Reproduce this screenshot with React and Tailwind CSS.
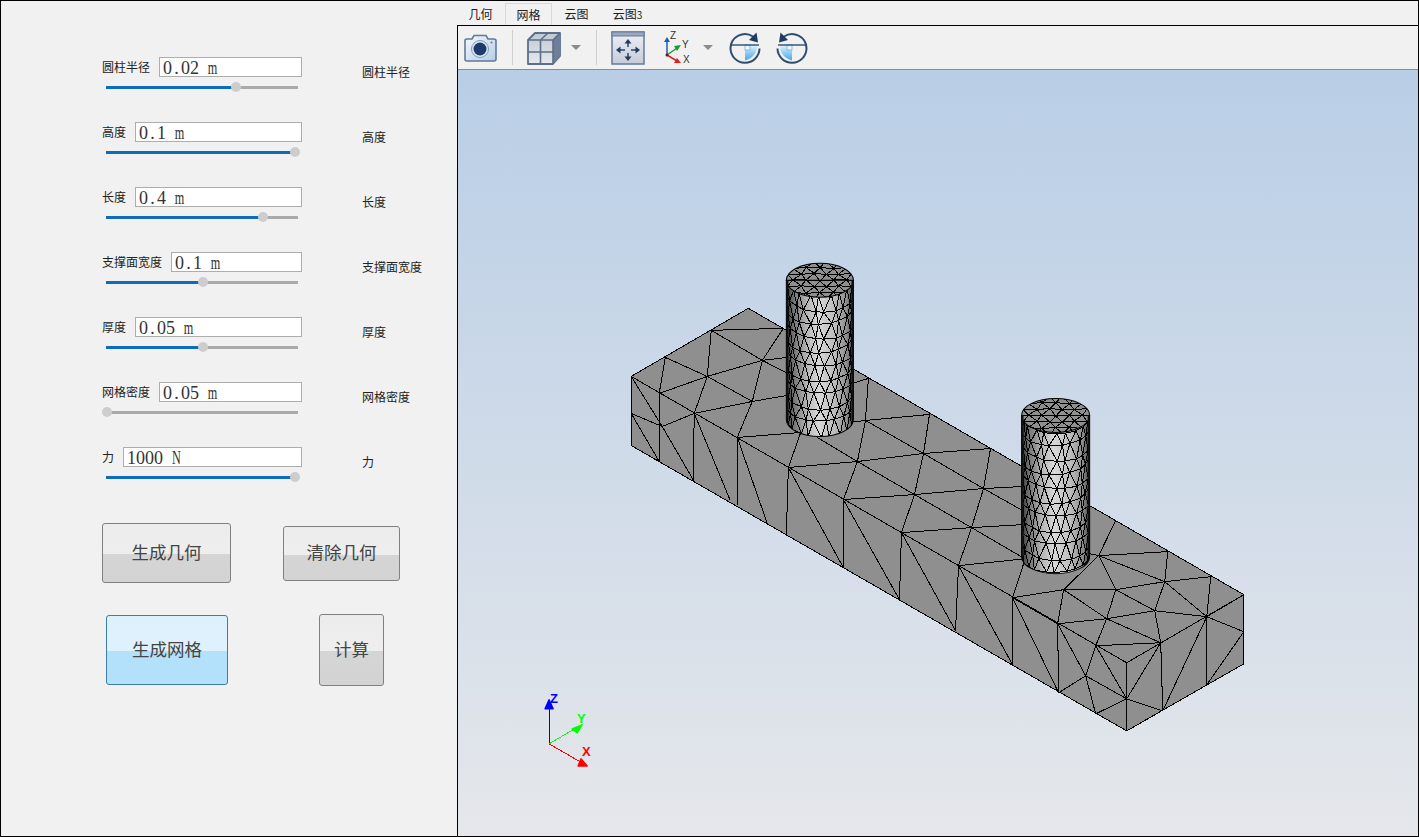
const rows = [
  { label: "圆柱半径", value: "0.02 m", thumb: 236 },
  { label: "高度", value: "0.1 m", thumb: 295 },
  { label: "长度", value: "0.4 m", thumb: 263 },
  { label: "支撑面宽度", value: "0.1 m", thumb: 203 },
  { label: "厚度", value: "0.05 m", thumb: 203 },
  { label: "网格密度", value: "0.05 m", thumb: 107 },
  { label: "力", value: "1000 N", thumb: 295 },
];

const meshLines = [
  // left part, top face
  [665,357,659,393],[665,357,707,376],[711,330,707,376],[711,330,762,360],[711,330,783,328],[783,328,762,360],
  [659,393,707,376],[707,376,762,360],[707,376,694,413],[707,376,752,401],[762,360,752,401],[762,360,787,357],
  [762,360,787,373],[752,401,737,437],[694,413,752,401],[752,401,787,395],[737,437,800,432],[800,433,788,467],
  [817,437,857,461],[788,467,857,461],
  // left part, front face
  [631,376,662,426],[631,413,662,426],[631,413,659,461],[659,393,659,461],[662,426,694,481],[662,426,694,413],
  [694,413,693,481],[694,413,730,500],[737,437,737,504],[737,437,767,523],[788,467,786,534],[788,467,843,567],
  [843,499,843,567],[843,499,899,599],[901,532,899,599],[901,532,955,630],[958,565,955,630],[958,565,1012,664],
  // middle, top face
  [857,461,865,420],[865,420,923,453],[865,420,929,414],[929,414,923,453],[857,461,923,453],[857,461,843,499],
  [857,461,914,494],[923,453,914,494],[923,453,983,488],[923,453,990,448],[990,448,983,488],[983,488,1022,486],
  [983,488,1022,510],[914,494,843,499],[914,494,983,488],[914,494,901,532],[914,494,971,527],[983,488,971,527],
  [971,527,901,532],[971,527,958,565],[971,527,1022,524],[971,527,1024,558],[958,565,1026,558],[1024,560,1012,597],
  [868,378,865,420],[852,383,868,378],[848,422,865,420],
  // right end, top face
  [1012,597,1063,589],[1012,597,1057,623],[1063,589,1098,555],[1063,589,1115,589],[1063,589,1106,618],[1063,589,1057,623],
  [1115,589,1106,618],[1115,589,1098,555],[1115,589,1164,581],[1106,618,1160,642],[1106,618,1154,610],[1115,589,1154,610],
  [1154,610,1164,581],[1164,581,1206,616],[1164,581,1167,551],[1164,581,1210,576],[1098,555,1164,581],[1098,555,1167,551],
  [1098,555,1115,520],[1088,553,1098,555],[1154,610,1206,616],[1154,610,1160,642],[1210,576,1206,616],[1206,616,1243,594],
  [1206,616,1243,631],[1206,616,1206,684],[1206,616,1162,710],[1243,631,1206,684],
  [1095,645,1160,642],[1057,623,1106,618],[1095,645,1106,618],
  // right end, side faces
  [1160,642,1126,698],[1160,642,1162,710],[1126,698,1162,710],[1126,698,1126,662],[1126,698,1126,730],[1126,698,1095,713],
  [1126,698,1085,675],[1126,698,1095,645],[1095,645,1085,675],[1057,623,1085,675],[1057,623,1058,692],[1085,675,1058,692],
  [1085,675,1095,713],[1012,597,1058,692],[1012,597,1012,664],
];

function Cylinder({ id, cx, yTop, yBot, R, ry }) {
  const bodyPath = `M${cx - R} ${yTop}V${yBot}A${R} ${ry} 0 0 0 ${cx + R} ${yBot}V${yTop}Z`;
  const nRows = 11;
  const cols = 10;
  const h = (yBot - yTop) / (nRows - 1);
  const jitter = (a, b) => Math.sin(a * 12.9 + b * 78.2 + cx) * 1.6;
  const pt = (i, j) => {
    const t = Math.max(-90, Math.min(90, -90 + ((j + (i % 2 ? 0.5 : 0)) * 180) / cols)) * (Math.PI / 180);
    return [cx + R * Math.sin(t) + jitter(i, j) * Math.cos(t), yTop + ry * Math.cos(t) + i * h + jitter(j, i)];
  };
  const lines = [];
  for (let i = 0; i < nRows; i++) {
    for (let j = 0; j <= cols; j++) {
      const p = pt(i, j);
      if (j < cols) lines.push([...p, ...pt(i, j + 1)]);
      if (i + 1 < nRows) {
        lines.push([...p, ...pt(i + 1, j)]);
        if (i % 2 && j < cols) lines.push([...p, ...pt(i + 1, j + 1)]);
        if (!(i % 2) && j > 0) lines.push([...p, ...pt(i + 1, j - 1)]);
      }
    }
  }
  const capLines = [];
  const dx = 13;
  const dy = 6.2;
  const cp = (r, c) => [cx + (c + (r % 2 ? 0.5 : 0)) * dx + Math.sin(r * 3 + c) * 1.2, yTop + r * dy + Math.cos(r + c * 2) * 0.7];
  for (let r = -3; r <= 3; r++) {
    for (let c = -4; c <= 4; c++) {
      const p = cp(r, c);
      capLines.push([...p, ...cp(r, c + 1)]);
      if (r < 3) {
        capLines.push([...p, ...cp(r + 1, c)]);
        capLines.push([...p, ...cp(r + 1, r % 2 ? c + 1 : c - 1)]);
      }
    }
  }
  return (
    <g>
      <defs>
        <linearGradient id={`shade-${id}`} x1="0" x2="1" y1="0" y2="0">
          <stop offset="0" stopColor="#333" />
          <stop offset="0.1" stopColor="#6f6f6f" />
          <stop offset="0.3" stopColor="#b4b4b4" />
          <stop offset="0.48" stopColor="#d8d8d8" />
          <stop offset="0.72" stopColor="#bcbcbc" />
          <stop offset="0.9" stopColor="#8c8c8c" />
          <stop offset="1" stopColor="#444" />
        </linearGradient>
        <clipPath id={`body-${id}`}><path d={bodyPath} /></clipPath>
        <clipPath id={`cap-${id}`}><ellipse cx={cx} cy={yTop} rx={R} ry={ry} /></clipPath>
      </defs>
      <path d={bodyPath} fill={`url(#shade-${id})`} />
      <g clipPath={`url(#body-${id})`} stroke="#000" strokeWidth="1" shapeRendering="crispEdges">
        {lines.map((l, n) => <line key={n} x1={l[0]} y1={l[1]} x2={l[2]} y2={l[3]} />)}
      </g>
      <ellipse cx={cx} cy={yTop} rx={R} ry={ry} fill="#8f8f8f" />
      <g clipPath={`url(#cap-${id})`} stroke="#000" strokeWidth="1" shapeRendering="crispEdges">
        {capLines.map((l, n) => <line key={n} x1={l[0]} y1={l[1]} x2={l[2]} y2={l[3]} />)}
      </g>
      <path d={bodyPath} fill="none" stroke="#000" strokeWidth="1" />
      <ellipse cx={cx} cy={yTop} rx={R} ry={ry} fill="none" stroke="#000" strokeWidth="1" />
      <line x1={cx - R + 1} y1={yTop} x2={cx - R + 1} y2={yBot} stroke="#111" strokeWidth="2" />
      <line x1={cx + R - 1} y1={yTop} x2={cx + R - 1} y2={yBot} stroke="#111" strokeWidth="2" />
    </g>
  );
}

function Scene() {
  return (
    <svg className="block w-full flex-1 min-h-0 bg-[linear-gradient(#b9cee6,#e5e7eb)]" viewBox="458 70 959 765" preserveAspectRatio="none">
      <g fill="#8f8f8f" stroke="#000" strokeWidth="1" shapeRendering="crispEdges" strokeLinejoin="round">
        <polygon points="631,376 748,308 1243,594 1126,662" />
        <polygon points="631,376 1126,662 1126,730 631,445" />
        <polygon points="1126,662 1243,594 1243,663 1126,730" />
      </g>
      <g stroke="#000" strokeWidth="1" shapeRendering="crispEdges">
        {meshLines.map((l, n) => <line key={n} x1={l[0]} y1={l[1]} x2={l[2]} y2={l[3]} />)}
      </g>
      <Cylinder id="a" cx={819.5} yTop={280} yBot={419} R={33.5} ry={17} />
      <Cylinder id="b" cx={1055} yTop={415} yBot={556} R={34} ry={17} />
      <g shapeRendering="crispEdges" strokeWidth="1">
        <line x1="549" y1="743" x2="549" y2="705" stroke="#0000ff" />
        <line x1="549" y1="743" x2="576" y2="727" stroke="#00ff00" />
        <line x1="549" y1="743" x2="582" y2="762" stroke="#ff0000" />
      </g>
      <polygon points="549,699 553,708 545,708" fill="#0000ff" stroke="#0000ff" strokeWidth="1.5" strokeLinejoin="round" />
      <polygon points="582,724 577,732 572,728" fill="#00ff00" stroke="#00ff00" strokeWidth="1.5" strokeLinejoin="round" />
      <polygon points="587,765 578,765 581,758" fill="#ff0000" stroke="#ff0000" strokeWidth="1.5" strokeLinejoin="round" />
      <g className="font-['Liberation_Sans',sans-serif] font-bold text-[13px]">
        <text x="550" y="702" fill="#0000ff">Z</text>
        <text x="577" y="722" fill="#00ff00">Y</text>
        <text x="582" y="755" fill="#ff0000">X</text>
      </g>
    </svg>
  );
}

function CameraIcon() {
  return (
    <svg width="34" height="30" viewBox="0 0 34 30" className="ml-[5px] shrink-0">
      <defs>
        <linearGradient id="cam" x1="0" x2="1" y1="0" y2="1">
          <stop offset="0" stopColor="#f4f8fc" />
          <stop offset="1" stopColor="#b6cde6" />
        </linearGradient>
      </defs>
      <path d="M2 7.5Q2 6 4 6H9L11 2.5H23L25 6H31Q33 6 33 8V26Q33 28 31 28H4Q2 28 2 26Z" fill="url(#cam)" stroke="#5f7a9c" strokeWidth="1.6" />
      <circle cx="17" cy="16" r="8.5" fill="#dce8f4" stroke="#7f9ab8" strokeWidth="1" />
      <circle cx="17" cy="16" r="6.5" fill="#1e3a6b" />
      <circle cx="28.5" cy="9.5" r="1" fill="#5f7a9c" />
    </svg>
  );
}

function CubeIcon() {
  return (
    <svg width="34" height="34" viewBox="0 0 34 34" className="shrink-0">
      <defs>
        <linearGradient id="cubef" x1="0" x2="0" y1="0" y2="1">
          <stop offset="0" stopColor="#c0c7d2" />
          <stop offset="1" stopColor="#e6e9ee" />
        </linearGradient>
      </defs>
      <path d="M1 9L8 2H33V25L26 33H1Z" fill="url(#cubef)" stroke="#5d6f88" strokeWidth="1.8" strokeLinejoin="round" />
      <path d="M26 9V33L33 25V2Z" fill="#6f7f97" />
      <path d="M1 9H26V33M1 21H26M13.5 9V33M13.5 9L21 2M26 9L33 2" fill="none" stroke="#5d6f88" strokeWidth="1.6" />
    </svg>
  );
}

function Caret({ className }) {
  return (
    <svg width="10" height="5" viewBox="0 0 10 5" className={`shrink-0 ${className}`}>
      <polygon points="0,0 10,0 5,5" fill="#8a8a8a" />
    </svg>
  );
}

function FitIcon() {
  return (
    <svg width="34" height="34" viewBox="0 0 34 34" className="shrink-0">
      <defs>
        <linearGradient id="fit" x1="0" x2="0" y1="0" y2="1">
          <stop offset="0" stopColor="#eef0f4" />
          <stop offset="1" stopColor="#c6ccd8" />
        </linearGradient>
      </defs>
      <rect x="1" y="1" width="32" height="32" fill="url(#fit)" stroke="#66799a" strokeWidth="1.5" />
      <rect x="1" y="1" width="32" height="4" fill="#9aa9c0" stroke="#66799a" strokeWidth="1" />
      <g stroke="#1f3a5f" strokeWidth="1.4">
        <line x1="17" y1="11" x2="17" y2="16" />
        <line x1="17" y1="22" x2="17" y2="27" />
        <line x1="8" y1="19" x2="14" y2="19" />
        <line x1="20" y1="19" x2="26" y2="19" />
      </g>
      <g fill="#1f3a5f">
        <polygon points="17,8 13.5,12.5 20.5,12.5" />
        <polygon points="17,30 13.5,25.5 20.5,25.5" />
        <polygon points="5,19 9.5,15.5 9.5,22.5" />
        <polygon points="29,19 24.5,15.5 24.5,22.5" />
      </g>
    </svg>
  );
}

function AxesIcon() {
  return (
    <svg width="30" height="36" viewBox="0 0 30 36" className="shrink-0">
      <line x1="4" y1="25" x2="4" y2="11" stroke="#1a5fb4" strokeWidth="1.5" />
      <polygon points="4,7 1,12 7,12" fill="#1a5fb4" />
      <line x1="4" y1="25" x2="14" y2="18" stroke="#1a9a3c" strokeWidth="1.5" />
      <polygon points="18,15 11,16 14,21" fill="#1a9a3c" />
      <line x1="4" y1="25" x2="14" y2="31" stroke="#e02020" strokeWidth="1.5" />
      <polygon points="18,33 11,33 14,28" fill="#e02020" />
      <circle cx="4" cy="25" r="1.5" fill="#7a1020" />
      <g className="font-['Liberation_Sans',sans-serif] text-[10px]" fill="#333">
        <text x="7" y="9">Z</text>
        <text x="19" y="18">Y</text>
        <text x="20" y="33">X</text>
      </g>
    </svg>
  );
}

function RotateIcon({ id, flip, className }) {
  return (
    <svg width="32" height="32" viewBox="0 0 32 32" className={`shrink-0 ${className}`}>
      <defs>
        <linearGradient id={id} x1="0" x2="0" y1="0" y2="1">
          <stop offset="0" stopColor="#e4f4fc" />
          <stop offset="1" stopColor="#44a6ea" />
        </linearGradient>
      </defs>
      <g transform={flip ? "matrix(-1 0 0 1 32 0)" : undefined}>
        <path d="M16 13H28Q28 25 16 28.5Z" fill={`url(#${id})`} />
        <rect x="16" y="13" width="5" height="5" fill="#eaf5fc" stroke="#5b9fd0" strokeWidth="0.6" />
        <path d="M2 13H30" stroke="#2f4d70" strokeWidth="1.4" fill="none" />
        <path d="M24 4.5A14.5 14.5 0 0 0 1.5 16A14.5 14.5 0 0 0 30.5 16.5" stroke="#2f4d70" strokeWidth="2" fill="none" />
        <polygon points="27.5,0.5 29,10.5 20,8" fill="#1f3a63" />
      </g>
    </svg>
  );
}

function Sep({ className }) {
  return <div className={`h-[35px] w-px shrink-0 bg-[#d0d0d0] ${className}`} />;
}

function Toolbar() {
  return (
    <div className="flex h-[44px] shrink-0 items-center border-b border-[#8c8c8c] bg-[#f1f1f1]">
      <CameraIcon />
      <Sep className="ml-[15px]" />
      <div className="ml-[14px]"><CubeIcon /></div>
      <Caret className="ml-[10px]" />
      <Sep className="ml-[15px]" />
      <div className="ml-[14px]"><FitIcon /></div>
      <div className="ml-[18px]"><AxesIcon /></div>
      <Caret className="ml-[10px]" />
      <RotateIcon id="rota" className="ml-[16px]" />
      <RotateIcon id="rotb" flip className="ml-[15px]" />
    </div>
  );
}

function ValueText({ value }) {
  return (
    <span className="flex pt-[2px] font-['Liberation_Serif',serif] text-[18px] leading-none text-[#333]">
      {value.split("").map((c, i) =>
        /[a-zA-Z]/.test(c) ? (
          <span key={i} className="flex w-[9px] scale-x-[0.68] justify-center">{c}</span>
        ) : (
          <span key={i} className="flex w-[9px] justify-center whitespace-pre">{c}</span>
        )
      )}
    </span>
  );
}

function ParamRow({ label, value, thumb }) {
  const pct = thumb - 106;
  return (
    <div className="flex h-[65px]">
      <div className="ml-[101px] w-[200px]">
        <div className="flex h-5 items-center gap-[9px]">
          <span className="shrink-0 text-[12px] leading-none text-[#222]">{label}</span>
          <div className="flex h-5 flex-1 items-center border border-[#adadad] bg-white pl-[3px]">
            <ValueText value={value} />
          </div>
        </div>
        <div className="relative mt-[5px] ml-[4px] flex h-[10px] w-[192px] items-center">
          <div className="h-[3px] w-full bg-[#aaaaaa]" />
          <div className="absolute left-0 top-[3.5px] h-[3px] bg-[#0f6cbd]" style={{ width: pct }} />
          <div
            className="absolute top-0 h-[10px] w-[10px] rounded-full bg-[#cdcdcd]"
            style={{ left: pct - 5 }}
          />
        </div>
      </div>
      <span className="ml-[60px] mt-[9px] text-[12px] leading-[12px] text-[#222]">{label}</span>
    </div>
  );
}

const grayBtn =
  "rounded-[3px] border border-[#808080] bg-[linear-gradient(#ececec_0%,#eeeeee_52%,#d5d5d5_52%,#d3d3d3_100%)] pb-[2px] text-[17.5px] text-[#444]";

export default function App() {
  return (
    <div className="flex h-[837px] w-[1419px] border border-black bg-[#f1f1f1] font-['Noto_Sans_CJK_SC',sans-serif]">
      <div className="w-[456px] shrink-0 pt-[56px]">
        {rows.map((r) => <ParamRow key={r.label} {...r} />)}
        <div className="mt-[11px] ml-[101px] flex items-center">
          <button className={`h-[60px] w-[129px] ${grayBtn}`}>生成几何</button>
          <button className={`ml-[52px] h-[55px] w-[117px] ${grayBtn}`}>清除几何</button>
        </div>
        <div className="mt-[31px] ml-[105px] flex items-center">
          <button className="h-[70px] w-[122px] rounded-[3px] border border-[#3d7ea8] bg-[linear-gradient(#dcf1fc_0%,#dff2fc_51%,#b3e0fa_51%,#b3e0fa_100%)] pb-[2px] text-[17.5px] text-[#444]">
            生成网格
          </button>
          <button className={`ml-[91px] h-[72px] w-[65px] ${grayBtn}`}>计算</button>
        </div>
      </div>
      <div className="flex min-w-0 flex-1 flex-col">
        <div className="flex h-6 shrink-0 items-end text-[12px] text-[#222]">
          <span className="ml-[11px] flex h-[22px] w-[25px] items-center justify-center">几何</span>
          <span className="ml-[12px] flex h-[22px] w-[47px] items-center justify-center border border-b-0 border-[#d9d9d9]">网格</span>
          <span className="ml-[12px] flex h-[22px] w-[25px] items-center justify-center">云图</span>
          <span className="ml-[23px] flex h-[22px] w-[31px] items-center justify-center">云图<span className="text-[10px]">3</span></span>
        </div>
        <div className="flex min-h-0 flex-1 flex-col border border-r-0 border-b-0 border-black">
          <Toolbar />
          <Scene />
        </div>
      </div>
    </div>
  );
}
